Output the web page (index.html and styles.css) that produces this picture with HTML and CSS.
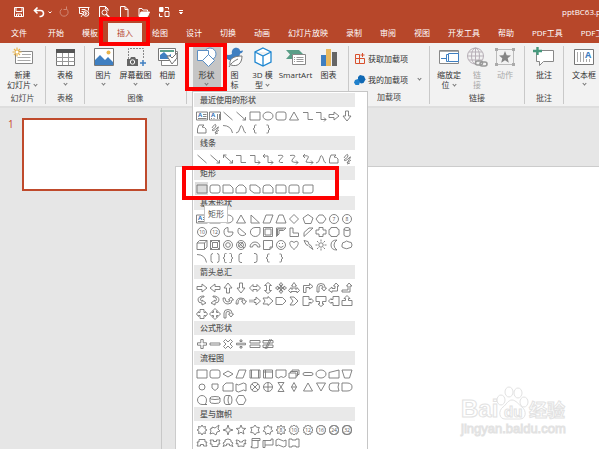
FILE: index.html
```
<!DOCTYPE html>
<html lang="zh-CN">
<head>
    <meta charset="UTF-8">
    <meta name="viewport" content="width=device-width, initial-scale=1.0">
    <title>pptBC63.pptx</title>
    <link rel="stylesheet" href="styles.css">
</head>
<body>
<div class="app">
    <header class="top">
        <div class="titlebar">
            <div class="quick">
                <button aria-label="保存"><svg viewBox="0 0 12 12"><path d="M1.5 1.5h9v9h-9zM3 2v3.5h6V2M3.500 10.500V8h5v2.500M5.500 8.500v2"/></svg></button>
                <button aria-label="撤消"><svg viewBox="0 0 12 12"><path stroke-width="1.600" d="M4.500 1.500L1.500 4.500l3 3M2 4.500h5.500a2.800 2.800 0 0 1 0 6H6.500"/></svg></button>
                <button class="small" aria-label="撤消列表"><svg viewBox="0 0 6 6"><path d="M1.500 2.500L3 4l1.500-1.500"/></svg></button>
                <button class="off" aria-label="重复"><svg viewBox="0 0 12 12"><path d="M8.500 3A4 4 0 1 1 4 2.800M8.500 .500V3.500H5.500"/></svg></button>
                <button aria-label="放映"><svg viewBox="0 0 12 12"><path d="M.500 1.500h11M1.500 1.500v6h3M10.500 1.500v3M3.500 3.500h4M3.500 5.500h2M3 11l2-3"/><circle cx="8" cy="7.500" r="2.800"/><path d="M7.200 6.200v2.600l2-1.300z"/></svg></button>
                <button aria-label="打印预览"><svg viewBox="0 0 12 12"><path d="M4 11.500H1.500V.500h6l2.500 2.500v2M7.500 .500V3H10"/><circle cx="6.500" cy="6.500" r="2.500"/><path stroke-width="1.500" d="M8.300 8.300l3 3"/></svg></button>
                <button aria-label="新建"><svg viewBox="0 0 12 12"><path d="M2.500 .500h4.500l3 3v8h-7.500zM7 .500v3h3"/></svg></button>
                <button aria-label="打开"><svg viewBox="0 0 12 12"><path d="M1 10V2.500h3l1 1.500h4.500v1.500"/><path fill="#fff" d="M1 10.500l2-4.500h8.500l-2 4.500z"/></svg></button>
                <button aria-label="排列"><svg viewBox="0 0 12 12"><path d="M1.500 1.500h3.500v4h-3.500zM7 5.500h4v5H7zM1.500 7.500v3h3M7 1.500h3.500v2"/><path fill="#fff" d="M2 2h2.500v3H2z"/></svg></button>
                <button class="small" aria-label="更多"><svg viewBox="0 0 6 6"><path d="M1 1.500h4M1.500 3.500h3L3 5z"/></svg></button>
            </div>
            <h1 class="doc">pptBC63.pptx</h1>
        </div>
        <nav class="tabs">
            <a class="file" href="#">文件</a>
            <a href="#">开始</a>
            <a href="#">模板</a>
            <a class="active" href="#">插入</a>
            <a href="#">绘图</a>
            <a href="#">设计</a>
            <a href="#">切换</a>
            <a href="#">动画</a>
            <a href="#">幻灯片放映</a>
            <a href="#">录制</a>
            <a href="#">审阅</a>
            <a href="#">视图</a>
            <a href="#">开发工具</a>
            <a href="#">帮助</a>
            <a href="#">PDF工具</a>
            <a href="#">PDF工具</a>
        </nav>
    </header>

    <section class="ribbon">
        <div class="group g-slide">
            <div class="tools">
                <button class="tool wide">
                    <svg viewBox="0 0 22 20"><path fill="#fff" stroke="#888" d="M3.500 4.500h17v12h-17z"/><path stroke="#aaa" d="M10 7.500h9M5.500 10.500h13M5.500 13.500h13"/><path stroke="#e9b44c" stroke-width="1.200" d="M5 .500v9M.500 5h9M2 2l6 6M8 2L2 8"/><circle cx="5" cy="5" r="1.500" fill="#fff"/></svg>
                    <span>新建</span><span>幻灯片 <i class="chev"></i></span>
                </button>
            </div>
            <p>幻灯片</p>
        </div>
        <div class="group g-one">
            <div class="tools">
                <button class="tool">
                    <svg viewBox="0 0 22 20"><path fill="#fff" stroke="#777" d="M2.500 2.500h18v16h-18z"/><path fill="#555" d="M2 2h19v4H2z"/><path stroke="#999" d="M2.500 10.500h18M2.500 14.500h18M8.500 6v12M14.500 6v12"/></svg>
                    <span>表格</span><i class="chev"></i>
                </button>
            </div>
            <p>表格</p>
        </div>
        <div class="group g-image">
            <div class="tools">
                <button class="tool wide">
                    <svg viewBox="0 0 22 20"><path fill="#fff" stroke="#777" d="M1.500 1.500h19v17h-19z"/><path fill="#3f7fc1" d="M2 18v-5l5-5 5 5 3-3 5 5v3z"/><circle cx="15.500" cy="5.500" r="2" fill="#e9b44c"/></svg>
                    <span>图片</span><i class="chev"></i>
                </button>
                <button class="tool wide">
                    <svg viewBox="0 0 22 20"><path stroke="#888" stroke-dasharray="2 1" d="M3.500 12V1.500h15v10"/><path fill="#666" d="M2 12h3l1-2h4l1 2h2v7H2z"/><circle cx="7.500" cy="15" r="2.200" fill="#666" stroke="#fff"/><path stroke="#3f7fc1" stroke-width="1.500" d="M18 13v6M15 16h6"/></svg>
                    <span>屏幕截图</span><i class="chev"></i>
                </button>
                <button class="tool wide">
                    <svg viewBox="0 0 22 20"><path fill="#fff" stroke="#888" d="M4.500 4.500h16v14h-16z"/><path fill="#fff" stroke="#777" d="M1.500 1.500h17v12h-17z"/><path fill="#3f7fc1" d="M3 12V8l4-3 4 4 3-2v5z"/><path fill="#5aa08c" d="M3 3h14v2H3z"/><path fill="#fff" stroke="#777" d="M10 9h3l2 2 5-5v5l-5 6z"/></svg>
                    <span>相册</span><i class="chev"></i>
                </button>
            </div>
            <p>图像</p>
        </div>
        <div class="group g-draw">
            <div class="tools">
                <button class="tool pressed" aria-expanded="true">
                    <svg viewBox="0 0 22 20"><g fill="#fff" stroke="#5b8ec4"><circle cx="14" cy="7" r="6"/><path d="M1.500 3.500h11v10h-11z"/><path d="M12.500 7.500l6 6-6 6-6-6z"/></g></svg>
                    <span>形状</span><i class="chev"></i>
                </button>
                <button class="tool">
                    <svg viewBox="0 0 22 20"><path fill="#3f7fc1" d="M1 7c3 1.500 5 1 7 0C7 3 10 0 13.500 1c2 .500 2.500 2 2.500 3l3-.500c0 2-2 3-3 3-.500 5-4 7-8 7C4 13.500 1 11 1 7z"/><path fill="#fff" stroke="#777" d="M6 18c-1-6 3-9 12-9 0 8-5 11-11 9M5 20c2-4 5-6 9-8"/></svg>
                    <span>图</span><span>标</span>
                </button>
                <button class="tool">
                    <svg viewBox="0 0 22 20"><path fill="#fff" stroke="#1f87d1" stroke-width="1.300" d="M11 1l8 4v10l-8 4-8-4V5zM3 5l8 4 8-4M11 9v10"/></svg>
                    <span>3D 模</span><span>型 <i class="chev"></i></span>
                </button>
                <button class="tool wider">
                    <svg viewBox="0 0 22 20"><path fill="#5a9e88" d="M1 3h13l4 4-4 5H1l4-4.500z"/><path fill="#fff" stroke="#888" d="M7.500 7.500h13v10h-13z"/><path stroke="#999" d="M9 10.500h1M11.500 10.500h7M9 12.500h1M11.500 12.500h7M9 14.500h1M11.500 14.500h7"/></svg>
                    <span>SmartArt</span>
                </button>
                <button class="tool">
                    <svg viewBox="0 0 22 20"><path fill="#3f7fc1" d="M3 8h5v11H3z"/><path fill="#e9b95f" d="M8 2h5v17H8z"/><path fill="#666" d="M14 5h5v14h-5z"/></svg>
                    <span>图表</span>
                </button>
            </div>
        </div>
        <div class="group g-addin">
            <div class="addins">
                <button><svg viewBox="0 0 12 12"><path stroke="#d8502d" d="M1.500 1.500h4v4h-4zM1.500 5.500h4v5h-4zM5.500 5.500h5v5h-5zM8.500 0v4M6.500 2h4"/></svg>获取加载项</button>
                <button><svg viewBox="0 0 12 12"><path fill="#1069b4" d="M6 1l4 1 1.500 3.500L9.500 9 7 9.500 4 7V3z"/><path fill="#2181cc" d="M1 6l3-1 2 3-1 3H1.500L0 8.500z"/></svg>我的加载项<i class="chev"></i></button>
            </div>
            <p>加载项</p>
        </div>
        <div class="group g-link">
            <div class="tools">
                <button class="tool">
                    <svg viewBox="0 0 22 20"><path fill="#fff" stroke="#888" d="M1.500 3.500h19v13h-19z"/><path fill="#aaa" d="M2 4h18v1H2z"/><path stroke="#3f7fc1" d="M3 11.500h5M10.500 7.500h-2v7h2"/><path fill="#fff" stroke="#3f7fc1" d="M10.500 6.500h10v8h-10z"/></svg>
                    <span>缩放定</span><span>位 <i class="chev"></i></span>
                </button>
                <button class="tool" disabled>
                    <svg viewBox="0 0 22 20"><g stroke="#b7afb7"><circle cx="9.500" cy="9" r="8"/><ellipse cx="9.500" cy="9" rx="4" ry="8"/><path d="M9.500 1v16M1.500 9h16M3 5h13M3 13h13"/></g><g stroke="#999" stroke-width="1.600"><rect x="9.500" y="14" width="7" height="4" rx="2" fill="#f1f1f1"/><rect x="14" y="15" width="7" height="4" rx="2"/></g></svg>
                    <span>链</span><span>接</span>
                </button>
                <button class="tool" disabled>
                    <svg viewBox="0 0 22 20"><path stroke="#bbb" d="M2.500 2.500h17v15h-17z"/><path fill="#aaa" d="M1 1h3v3H1zM18 1h3v3h-3zM1 16h3v3H1zM18 16h3v3h-3z"/><path fill="#858585" d="M11 4l1.700 4.300 4.300.200-3.300 2.800 1.100 4.500L11 13.300l-3.800 2.500 1.100-4.500L5 8.500l4.300-.200z"/></svg>
                    <span>动作</span>
                </button>
            </div>
            <p>链接</p>
        </div>
        <div class="group g-one">
            <div class="tools">
                <button class="tool">
                    <svg viewBox="0 0 22 20"><path fill="#fff" stroke="#888" d="M3.500 3.500h17v11h-10l-4 4v-4h-3z"/><path stroke="#46987c" stroke-width="2.400" d="M4.500 0v8M0 4h9"/></svg>
                    <span>批注</span>
                </button>
            </div>
            <p>批注</p>
        </div>
        <div class="group g-text">
            <div class="tools">
                <button class="tool">
                    <svg viewBox="0 0 22 20"><path fill="#fff" stroke="#777" d="M1.500 2.500h19v15h-19z"/><path stroke="#aaa" d="M4.500 5v10M7.500 5v10M10.500 5v10M13.500 12v3M16.500 12v3"/><text class="letter" x="12" y="11">A</text></svg>
                    <span>文本框</span><i class="chev"></i>
                </button>
            </div>
        </div>
    </section>

    <main class="work">
        <aside class="slides">
            <span>1</span>
            <button class="thumb" aria-label="幻灯片 1"></button>
        </aside>
        <div class="stage">
            <div class="slide">
                <svg class="mark" viewBox="0 0 110 54">
                    <text class="latin" x="0" y="31">Bai</text>
                    <g><ellipse cx="40" cy="14" rx="4" ry="5"/><ellipse cx="48" cy="6" rx="4" ry="5"/><ellipse cx="57" cy="7" rx="4" ry="5"/><ellipse cx="63" cy="16" rx="4" ry="5"/><path d="M51 14c-4 0-6 5-9 7-5 4-4 12 2 12h15c6 0 7-8 2-12-3-2-6-7-10-7z"/></g>
                    <text class="du" x="43" y="31">du</text>
                    <text class="han" x="68" y="31">经验</text>
                    <text class="url" x="0" y="47">jingyan.baidu.com</text>
                </svg>
            </div>
        </div>
    </main>

    <div class="menu" id="menu"></div>
    <div class="tip" role="tooltip">矩形</div>
    <div class="frame frame-tab"></div>
    <div class="frame frame-tool"></div>
    <div class="frame frame-row"></div>
</div>
<script src="shapes.js"></script>
</body>
</html>
```
FILE: styles.css
```
* {
    margin: 0;
    padding: 0;
    box-sizing: border-box;
}
body {
    background: #fff;
    font-family: "Open Sans", "Noto Sans CJK SC", sans-serif;
    font-size: 8px;
    line-height: 10px;
    color: #333;
    text-autospace: no-autospace;
    overflow: hidden;
}
button {
    border: none;
    background: none;
    font: inherit;
    color: inherit;
}
svg {
    display: block;
    fill: none;
    overflow: visible;
}
.app {
    position: relative;
    display: flex;
    flex-direction: column;
    height: 100vh;
    margin-right: 2px;
    overflow: hidden;
}

/* title and tabs */
.top {
    background: #b7472a;
    color: #fff;
}
.titlebar {
    display: flex;
    justify-content: space-between;
    align-items: center;
    height: 23px;
    padding-left: 13px;
    overflow: hidden;
}
.quick {
    display: flex;
    align-items: center;
    gap: 8px;
}
.quick svg {
    width: 12px;
    height: 12px;
    stroke: #fff;
}
.quick .small {
    margin: 0 -3px 0 -6px;
}
.quick .small:last-child {
    margin: 0;
}
.quick .small svg {
    width: 6px;
    height: 6px;
}
.quick .off {
    opacity: 0.35;
}
.doc {
    width: 37px;
    font-size: 8px;
    font-weight: 400;
    white-space: nowrap;
}
.tabs {
    display: flex;
    height: 20px;
    padding-left: 2px;
    overflow: hidden;
}
.tabs a {
    flex: none;
    padding: 0 9px;
    line-height: 20px;
    color: #fff;
    text-decoration: none;
}
.tabs .file {
    margin-right: 3px;
}
.tabs .active {
    margin: 0 1px;
    background: #f3f2f1;
    color: #b7472a;
}

/* ribbon */
.ribbon {
    display: flex;
    flex: none;
    height: 65px;
    padding: 3px 0 2px;
    background: #f2f2f2;
    border-bottom: 2px solid #dedede;
    overflow: hidden;
}
.group {
    flex: none;
    display: flex;
    flex-direction: column;
    justify-content: space-between;
    border-right: 1px solid #c9c9c9;
}
.group p {
    line-height: 14px;
    text-align: center;
    color: #444;
}
.g-slide {
    width: 46px;
}
.g-one {
    width: 39px;
}
.g-image {
    width: 102px;
}
.g-draw {
    width: 162px;
}
.g-addin {
    width: 81px;
}
.g-link {
    width: 95px;
}
.g-text {
    width: 40px;
    border: none;
}
.tools {
    display: flex;
    justify-content: center;
}
.tool {
    display: flex;
    flex-direction: column;
    align-items: center;
    width: 28px;
    height: 45px;
    padding-top: 1px;
    white-space: nowrap;
}
.tool.wide {
    width: 32px;
}
.tool.wider {
    width: 38px;
}
.tool svg {
    width: 22px;
    height: 20px;
    margin-bottom: 3px;
}
.tool:disabled {
    color: #aaa;
}
.pressed {
    background: #c5c5c5;
}
.chev {
    display: inline-block;
    width: 3px;
    height: 3px;
    margin: 0 1px 2px;
    border: solid #777;
    border-width: 0 1px 1px 0;
    transform: rotate(45deg);
}
.tool > .chev {
    margin-top: 2px;
}
.letter {
    font-size: 9px;
    font-weight: 700;
    fill: #3f7fc1;
}
.addins {
    padding: 2px 0 0 5px;
}
.addins button {
    display: flex;
    align-items: center;
    gap: 2px;
    height: 21px;
    white-space: nowrap;
}
.addins svg {
    width: 12px;
    height: 12px;
}
.addins .chev {
    margin-left: 8px;
}

/* slide list and canvas */
.work {
    display: flex;
    flex: 1;
    background: #e6e6e6;
}
.slides {
    display: flex;
    align-items: flex-start;
    width: 162px;
    padding: 10px 14px 0 8px;
    border-right: 1px solid #c8c8c8;
}
.slides span {
    width: 14px;
    padding-top: 1px;
    font-size: 10px;
    color: #c8492a;
}
.thumb {
    flex: 1;
    height: 73px;
    background: #fff;
    border: 2px solid #bf4a2c;
}
.stage {
    display: flex;
    flex: 1;
    padding: 58px 0 0 13px;
}
.slide {
    display: flex;
    flex: 1;
    align-items: flex-end;
    justify-content: flex-end;
    padding: 0 28px 9px 0;
    background: #fff;
    border: solid #ccc;
    border-width: 1px 0 0 1px;
}
.mark {
    width: 110px;
    height: 54px;
    fill: #fff;
    stroke: #e2e2e2;
}
.mark text {
    font-family: "Liberation Sans", "Noto Sans CJK SC", sans-serif;
    font-weight: 700;
}
.latin {
    font-size: 24px;
}
.mark .du {
    font-size: 15px;
}
.mark .han {
    font-size: 18px;
}
.mark .url {
    font-size: 13px;
    font-weight: 400;
}

/* shapes drop-down */
.menu {
    position: absolute;
    top: 91px;
    bottom: 0;
    left: 192px;
    width: 176px;
    padding: 1px 12px 0 1px;
    background: #fff;
    border: solid #c6c6c6;
    border-width: 1px 1px 0;
    overflow: hidden;
}
.menu h2 {
    height: 14px;
    padding-left: 6px;
    background: #e9e9e9;
    font-size: 8px;
    font-weight: 500;
    line-height: 14px;
    color: #555;
}
.shapes {
    display: grid;
    grid-template-columns: repeat(12, 1fr);
    grid-auto-rows: 13px;
    padding: 2px 1px 1px;
}
.shapes button {
    display: flex;
    align-items: center;
    justify-content: center;
}
.shapes .hover {
    background: #dcdcdc;
}
.shapes svg {
    width: 12px;
    height: 12px;
    stroke: #777;
    stroke-width: 0.9;
}
.shapes text {
    font-size: 5px;
    text-anchor: middle;
    fill: #555;
    stroke: none;
}
.shapes .blue {
    font-size: 6px;
    font-weight: 700;
    fill: #2f6fb5;
}
.tip {
    position: absolute;
    top: 205px;
    left: 204px;
    padding: 0 3px;
    background: #fff;
    border: 1px solid #c4c4c4;
    line-height: 16px;
    color: #555;
}

/* red marks */
.frame {
    position: absolute;
    border: 4px solid #fe0000;
    pointer-events: none;
}
.frame-tab {
    top: 17px;
    left: 99px;
    width: 51px;
    height: 29px;
}
.frame-tool {
    top: 43px;
    left: 185px;
    width: 42px;
    height: 48px;
}
.frame-row {
    top: 166px;
    left: 182px;
    width: 157px;
    height: 34px;
}
```
FILE: shapes.js
```
// every outline sits on a 12 x 12 grid; "path|label" adds a small label
const line = 'M1.5 2l9 8';
const arrow = 'M1.5 2l9 8M7.500 10h3V7';
const rect = 'M1 2h10v8H1z';
const oval = 'M1 6a5 4 0 1 0 10 0a5 4 0 1 0-10 0z';
const round = 'M3 2h6q2 0 2 2v4q0 2-2 2H3q-2 0-2-2V4q0-2 2-2z';
const tri = 'M6 2l4.500 8h-9z';
const elbow = 'M1 2.500h5v7h5';
const elbowArrow = 'M1 2.500h5v7h5M9 7.500l2 2-2 2';
const right = 'M1 4.500h5V2l5 4-5 4V7.500H1z';
const down = 'M4.500 1v5H2l4 5 4-5H7.500V1z';
const free = 'M3 2h5l-2 2q3 0 4 2v4H1.500V6z';
const scribble = 'M3 5q3-5 4-3T3 7q1 2 5-2t-2 5l4-3M6 11l3-1';
const curve = 'M1 10q3 0 4-5t3 0q1 5 3 5';
const leftBrace = 'M7.500 2H6.500q-1 0-1 1v2L4 6l1.500 1v2q0 1 1 1h1';
const rightBrace = 'M4.500 2h1q1 0 1 1v2L8 6 6.500 7v2q0 1-1 1h-1';
const ring = 'M1.500 6a4.500 4.500 0 1 0 9 0a4.500 4.500 0 1 0-9 0z';
const box = 'M1.500 1.500h9v9h-9z';
const textbox = 'M.500 2h11v8H.500zM7 4.500h3.500M7 6.500h3.500M2 8.500h8.500|A';
const uturn = 'M2 10V5q0-3.500 4-3.500T10 5v1h1.500L9 9 6.500 6H8V5q0-1.500-2-1.500T4 5v5z';
const para = 'M4 2h7l-3 8H1z';
const burst = n => {
    let d = '';
    for (let i = 0; i < n * 2; i++) {
        const inner = n < 5 ? 1.7 : n < 6 ? 2.2 : n < 9 ? 3.2 : 4;
        const r = i % 2 ? inner : 5;
        const a = Math.PI * i / n - Math.PI / 2;
        d += (i ? 'L' : 'M') + (6 + r * Math.cos(a)).toFixed(2) + ' ' + (6 + r * Math.sin(a)).toFixed(2);
    }
    return d + 'z';
};

const sections = [
    ['最近使用的形状', [
        textbox, 'M.500 2h11v8H.500zM8.500 4v5M10.500 4v5M2.500 8v1M5 8v1|A', line, arrow, rect, oval, round, tri, elbow, elbowArrow, right, down,
        free, scribble, 'M1 2.500q8 0 9.500 7.500', curve, leftBrace, rightBrace
    ]],
    ['线条', [
        line, arrow, 'M1.500 2l9 8M7.500 10h3V7M1.500 5V2h3', elbow, elbowArrow, 'M1 3h5v6.500h5M9 7.500l2 2-2 2M3 1L1 3l2 2',
        'M3 2.500q7-1 4 2t-3 4q1 1.500 4 1', 'M2 2.500q7-1 4 2t-2 4q1 1 6 1M8 7.500l2 2-2 2', 'M1 3q7-1 5 2t-2 4q1 .500 7 .500M9 7.500l2 2-2 2M3 1L1 3l2 2',
        curve, free, scribble
    ]],
    ['矩形', [
        rect, round, 'M1 2h7l3 3v5H1z', 'M1 10V5l3-3h4l3 3v5z', 'M1 2h6l4 3v5H5L1 7z', 'M1 10V5q0-3 3-3h4l3 3v5z',
        'M1 2h8q2 0 2 2v6H1z', 'M1 10V4q0-2 2-2h6q2 0 2 2v6z', 'M3 2h8v6q0 2-2 2H1V4q0-2 2-2z'
    ]],
    ['基本形状', [
        textbox, 'M.500 2h11v8H.500z', oval, tri, 'M2 2v8h8.500z', para, 'M4 2h4l3 8H1z', 'M6 1.500L10.500 6 6 10.500 1.500 6z',
        'M6 1.500l5 3.500-2 5.500H3L1 5z', 'M4 2h4l3 4-3 4H4L1 6z', ring + '|7', ring + '|8',
        ring + '|10', ring + '|12', 'M6 1.500V6h5a4.500 4.500 0 1 1-5-4.500z', 'M4 2a4.500 4.500 0 1 0 7 6z', 'M11 1.500V6a4.800 4.500 0 1 1-5-4.500z',
        box + 'M3 3h6v6H3z', 'M1.500 2h9.500L8.500 4.500H4V8l-2.500 2.500zM2.500 3h6M2.500 3v6', 'M2 2h3v5h5.500v3.500H2z', 'M7 2h4L2 10.500V6.500z',
        'M4 1.500h4V4h3v4H8v2.500H4V8H1V4h3z', 'M3 1.500h6q0 2 2 2v5q-2 0-2 2H3q0-2-2-2v-5q2 0 2-2z', 'M3 3q0-1.500 3-1.500T9 3v6q0 1.500-3 1.500T3 9zM3 3q0 1.500 3 1.500T9 3',
        'M1 4l2.500-2.500H11v6.500l-2.500 2.500H1zM1 4h7.500v6.500M8.500 4L11 1.500', box + 'M3.500 3.500h5v5h-5zM1.500 1.500l2 2M10.500 1.500l-2 2M1.500 10.500l2-2M10.500 10.500l-2-2',
        ring + 'M3.700 6a2.300 2.300 0 1 0 4.600 0a2.300 2.300 0 1 0-4.600 0z', ring + 'M3.500 6a2.500 2.500 0 1 0 5 0a2.500 2.500 0 1 0-5 0zM3 3l6 6M3.500 8L8 3',
        'M1 8a5 5 0 0 1 10 0H8.500a2.500 2.500 0 0 0-5 0z', 'M1.500 1.500h9V8L8 10.500H1.500zM8 10.500V8h2.500', ring + 'M3.500 7q2.500 3 5 0M4.500 4v1M7.500 4v1',
        'M6 10.500C-1 5 2 0 6 3.500 10 0 13 5 6 10.500z', 'M2 1.500l4 1 1 3 2 1 2 4-4-3-1-1-2-1z', 'M3.800 6a2.200 2.200 0 1 0 4.400 0a2.200 2.200 0 1 0-4.400 0zM6 .500v2M6 9.500v2M.500 6h2M9.500 6h2M2 2l1.500 1.500M10 2L8.500 3.500M2 10l1.500-1.500M10 10L8.500 8.500',
        'M9 1q-6 0-6 5t6 5Q6 9 6 6t3-5z', 'M3 9Q0 8.500 1 6q0-3 3-3Q5 1 8 3q3-.500 3 3 0 3-3 3-2 1.500-5 0z',
        'M1 2.500q8 0 9.500 8', 'M4 1.500q-2 0-2 2v5q0 2 2 2M8 1.500q2 0 2 2v5q0 2-2 2', 'M4.500 1.500h-1q-1 0-1 1v2.500L1 6l1.500 1v2.500q0 1 1 1h1M7.500 1.500h1q1 0 1 1v2.500L11 6 9.500 7v2.500q0 1-1 1h-1',
        'M7 1.500H6q-2 0-2 2v5q0 2 2 2h1', 'M5 1.500h1q2 0 2 2v5q0 2-2 2H5', leftBrace, rightBrace
    ]],
    ['箭头总汇', [
        right, 'M11 4.500H6V2L1 6l5 4V7.500h5z', 'M4.500 11V6H2l4-5 4 5H7.500v5z', down, 'M.500 6L4 2.500v2h4v-2L11.500 6 8 9.500v-2H4v2z',
        'M6 .500L9.500 3.500h-2v5h2L6 11.500 2.500 8.500h2v-5h-2z', 'M6 .500L8 3H6.500v2.500H9V4l2.500 2L9 8V6.500H6.500V9H8l-2 2.500L4 9h1.500V6.500H3V8L.500 6 3 4v1.500h2.500V3H4z',
        'M6 .500L8.500 4H7v3h2V5.500l2.500 3L9 11V9.500H3V11L.500 8.500 3 5.500V7h2V4H3.500z', 'M1.500 10.500V3.500h6v-2L11 4.500 7.500 7V5.500H4v5z', uturn,
        'M.500 8L4 5v1.500h3V4H5.500L8 1l3 3H9.500v5H4v1.500z', 'M1 8h6V4H5.500L8 1l3 3H9v6H1z',
        'M8 1Q2 1 2 5q0 3 4 3v2l4-2-4-3v1.500Q3.500 5 5 3q1-1 3-1z', 'M4 1q6 0 6 4 0 3-4 3v2L2 8l4-3v1.500Q8.500 5 7 3 6 2 4 2z', 'M1 3q0 6 5 6 4 0 4-4h1.500L9 2 6.500 5H8q0 2-2 2-3 0-3-4z',
        'M1 9q0-6 5-6 4 0 4 3h1.500L9 9.500 6.500 6H8q0-2-2-2Q3 4 3 9z', 'M5 4.500h2V2l4.500 4L7 10V7.500H5zM1 4.500v3M3 4.500v3', 'M1 3h5V1.500L11 6l-5 4.500V9H1l2-3z',
        'M1 2.500h6.500L11 6 7.500 9.500H1z', 'M2 2h4l4 4-4 4H2l3-4z', 'M1 1.500h6v3h2v-1L11.500 6 9 8.500v-1H7v3H1z', 'M1 1.500h10v5H7.500V9H9l-3 2.500L3 9h1.500V6.500H1z',
        'M11 1.500H5v3H3v-1L.500 6 3 8.500v-1h2v3h6z', 'M1 10.500h10v-5H7.500V3.500H9L6 .500 3 3.500h1.500v2H1z',
        'M4 1.500h4v3h1.500v-1l2 2.500-2 2.500v-1H8v3H4v-3H2.500v1L.500 6l2-2.500v1H4z', 'M6 .500l2.500 2.500H7.500v1.500H9v-1L11.500 6 9 8.500v-1H7.500V9h1L6 11.500 3.500 9h1V7.500H3v1L.500 6 3 3.500v1h1.500V3h-1z', uturn
    ]],
    ['公式形状', [
        'M4.800 1.500h2.400v3.300h3.300v2.400H7.200v3.300H4.800V7.200H1.500V4.800h3.300z', 'M1 5h10v2H1z', 'M3.500 1.500L6 4l2.500-2.500 2 2L8 6l2.500 2.500-2 2L6 8l-2.500 2.500-2-2L4 6 1.500 3.500z',
        'M1.500 5.200h9v1.600h-9zM5 2h2v1.500H5zM5 8.500h2V10H5z', 'M1 2.500h10v2.500H1zM1 7h10v2.500H1z', 'M1 2.500h10v2.500H1zM1 7h10v2.500H1zM3 11L8 1M4.500 11l5-10'
    ]],
    ['流程图', [
        rect, round, 'M6 3l5 3-5 3-5-3z', para, 'M1 2h10v8H1zM2.500 2v8M9.500 2v8', 'M1.500 2h9v8h-9zM3.500 2v8M1.500 4h9', 'M1 2h10v6L8.500 9.500 6 8.500 3.500 10 1 9z',
        'M1 5h7v5H1zM2.500 5V3.500h7V8H8M4 3.500V2h7v4.500H9.500', 'M3 4.500h6q2 0 2 1.500T9 7.500H3Q1 7.500 1 6t2-1.500z', oval, 'M1 4.500l10-2.500v8H1z', 'M1 2h10L8.500 10h-5z',
        'M3 6a3 3 0 1 0 6 0a3 3 0 1 0-6 0z', 'M3 3h6v4L6 9.500 3 7z', 'M4 2h7v8H1V5z', 'M1 3q2.500 2 5 0t5 0v7q-2.500-2-5 0t-5 0z', ring + 'M3 3l6 6M9 3l-6 6', ring + 'M6 1.500v9M1.500 6h9',
        'M3 1.500h6L3 10.500h6z', 'M6 1.500L8.500 6 6 10.500 3.500 6zM3.500 6h5', tri, 'M1.500 2h9L6 10z', 'M4 2h7q-2 4 0 8H4Q1 10 1 6t3-4z', 'M1 2h5q5 0 5 4t-5 4H1z',
        'M6 10.500a4.500 4.500 0 1 1 4.500-4.500q0 3-1.500 4.500h2z', 'M1 4q0-1.500 5-1.500T11 4v4q0 1.500-5 1.500T1 8zM1 4q0 1.500 5 1.500T11 4', 'M4 1.500h4q2 0 2 4.500t-2 4.500H4Q2 10.500 2 6t2-4.500zM8 1.500q-2 0-2 4.500t2 4.500', 'M3.500 1.500h5L11 6l-2.500 4.500h-5L1 6z'
    ]],
    ['星与旗帜', [
        burst(8), 'M3 3l3 1 4-3-1 4 2 2-3 1-1 3-3-2-3 1 1-3-1-2 2-.500z', burst(4), burst(5), burst(6), burst(7), burst(8) + '|8', burst(10) + '|10', burst(12) + '|12', burst(16) + '|16', burst(24) + '|24', burst(32) + '|32',
        'M1 5h2V2.500h6V5h2L10 7l1 2H7.500V7.500h-3V9H1l1-2z', 'M1 3h3.500v1.500h3V3H11l-1 2 1 2H9v2.500H3V7H1l1-2z', 'M1 6q1-1 2-1V3q3-2 6 0v2q1 0 2 1l-1 1.500 1 2q-2-1-3.500-1V7h-3v1.500q-1.500 0-3.500 1l1-2z',
        'M1 3q2 0 3.500 1v1h3V4Q9 3 11 3l-1 2 1 2q-1-.500-2-.500v3q-3-1-6 0v-3Q2 6.500 1 7l1-2z', 'M3 1.500h8v2H9v7q-4 1-7 0v-1h1zM3 3.500h6', 'M1 3.500h8V2h2v6H3v2.500H1zM3 3.500V8', 'M1 3q2.500-2 5 0t5 0v6q-2.500 2-5 0t-5 0z', 'M1 2h3v1h4V2h3v8H8V9H4v1H1z'
    ]]
];

const menu = document.getElementById('menu');
for (const [title, shapes] of sections) {
    const cells = shapes.map(shape => {
        const [d, label] = shape.split('|');
        const cls = title === '矩形' && shape === rect ? ' class="hover"' : '';
        const text = !label ? '' : label === 'A' ? '<text class="blue" x="4" y="7">A</text>' : `<text x="6" y="8">${label}</text>`;
        return `<button${cls}><svg viewBox="0 0 12 12"><path d="${d}"/>${text}</svg></button>`;
    });
    menu.insertAdjacentHTML('beforeend', `<h2>${title}</h2><div class="shapes">${cells.join('')}</div>`);
}
```
